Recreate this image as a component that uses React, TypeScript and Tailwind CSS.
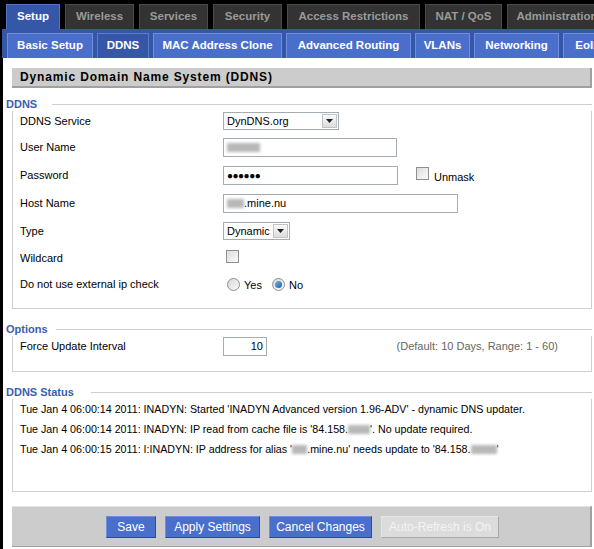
import React from 'react';

const font = { fontFamily: '"Liberation Sans", Arial, sans-serif' };

const topTabs = [
    { label: 'Setup', w: 'w-[54px]', active: true },
    { label: 'Wireless', w: 'w-[69px]' },
    { label: 'Services', w: 'w-[69px]' },
    { label: 'Security', w: 'w-[69px]' },
    { label: 'Access Restrictions', w: 'w-[133px]' },
    { label: 'NAT / QoS', w: 'w-[77px]' },
    { label: 'Administration', w: 'w-[100px]' },
];

const subTabs = [
    { label: 'Basic Setup', w: 'w-[86px]' },
    { label: 'DDNS', w: 'w-[52px]', active: true },
    { label: 'MAC Address Clone', w: 'w-[129px]' },
    { label: 'Advanced Routing', w: 'w-[125px]' },
    { label: 'VLANs', w: 'w-[55px]' },
    { label: 'Networking', w: 'w-[85px]' },
    { label: 'EoIP Tunnel', w: 'w-[90px]' },
];

function Blur({ w }: { w: string }) {
    return <span className={`inline-block h-[9px] ${w} bg-[#b8b8b8] blur-[1.5px] align-middle`} />;
}

function SelectBox({ value, w }: { value: string; w: string }) {
    return (
        <div className={`flex h-[18px] ${w} items-center border border-[#a5acb2] bg-white`}>
            <span className="flex-1 pl-[3px] text-[11px] text-black">{value}</span>
            <span className="mr-[1px] flex h-[14px] w-[15px] items-center justify-center border border-[#c3c3c3] bg-gradient-to-b from-[#fafafa] to-[#dcdcdc]">
                <svg width="7" height="4" viewBox="0 0 7 4"><path d="M0 0h7L3.5 4z" fill="#222" /></svg>
            </span>
        </div>
    );
}

function TextBox({ w, children, right }: { w: string; children?: React.ReactNode; right?: boolean }) {
    return (
        <div className={`flex h-[19px] ${w} items-center border border-[#a5acb2] bg-white px-[3px] text-[11px] text-black ${right ? 'justify-end' : ''}`}>
            {children}
        </div>
    );
}

function Check() {
    return <span className="inline-block h-[13px] w-[13px] border border-[#8f8f8f] bg-gradient-to-br from-[#dcdcdc] to-[#fbfbfb]" />;
}

function Radio({ checked }: { checked?: boolean }) {
    return (
        <span className="flex h-[13px] w-[13px] items-center justify-center rounded-full border border-[#8f8f8f] bg-gradient-to-br from-[#d8d8d8] to-[#fafafa]">
            {checked && <span className="h-[7px] w-[7px] rounded-full bg-gradient-to-br from-[#6fb5ef] to-[#0f5fa8]" />}
        </span>
    );
}

function Section({ title, gap, children, boxClass }: { title: string; gap: string; children: React.ReactNode; boxClass: string }) {
    return (
        <div className="ml-[3px] mr-[2px]">
            <div className="flex h-[14px] items-center">
                <span className="text-[11px] font-bold leading-none text-[#3a5db2]">{title}</span>
                <div className={`${gap} flex-1 border-t border-[#cfcfcf]`} />
            </div>
            <div className={`ml-[6px] border-x border-b border-[#cfcfcf] ${boxClass}`}>{children}</div>
        </div>
    );
}

function Row({ label, children, h = 'h-[28px]' }: { label: string; children: React.ReactNode; h?: string }) {
    return (
        <div className={`flex ${h} items-center`}>
            <span className="w-[210px] shrink-0 pl-[7px] text-[11px] text-black">{label}</span>
            <div className="flex items-center">{children}</div>
        </div>
    );
}

function Btn({ children, w, off }: { children: React.ReactNode; w: string; off?: boolean }) {
    return (
        <div
            className={`flex h-[22px] ${w} items-center justify-center border text-[12px] ${
                off
                    ? 'border-[#e6e6e6] border-b-[#a8a8a8] border-r-[#a8a8a8] bg-[#dcdcdc] text-[#f4f4f4]'
                    : 'border-[#6d8edc] border-b-[#2b4a98] border-r-[#2b4a98] bg-[#4a6fcb] text-white'
            }`}
        >
            {children}
        </div>
    );
}

export default function App() {
    return (
        <div className="h-[549px] w-[594px] overflow-hidden bg-black" style={font}>
            {/* top tabs */}
            <div className="flex h-[29px] items-end gap-[5px] overflow-hidden pl-[6px]">
                {topTabs.map((t) => (
                    <div
                        key={t.label}
                        className={`flex h-[25px] shrink-0 ${t.w} items-center justify-center border border-b-0 text-[11.5px] font-bold ${
                            t.active ? 'border-[#5373c4] bg-[#3656a8] text-white' : 'border-[#4a4a4a] bg-[#333333] text-[#9a9a9a]'
                        }`}
                    >
                        {t.label}
                    </div>
                ))}
            </div>
            {/* sub tabs */}
            <div className="ml-[2px] flex h-[29px] items-end gap-[4px] overflow-hidden bg-[#3656a8] pl-[5px]">
                {subTabs.map((t) => (
                    <div
                        key={t.label}
                        className={`flex h-[25px] shrink-0 ${t.w} items-center justify-center border border-b-0 text-[11.5px] font-bold text-white ${
                            t.active ? 'border-[#5b7bcc] bg-[#3656a8]' : 'border-[#6f8fde] bg-[#4a6fca]'
                        }`}
                    >
                        {t.label}
                    </div>
                ))}
            </div>
            {/* content */}
            <div className="ml-[3px] h-[491px] bg-white pt-[10px]">
                <div className="ml-[9px] mr-[2px] flex h-[20px] items-center border-b-2 border-r-2 border-[#a0a0a0] bg-[#cccccc] pl-[8px] text-[12px] font-bold tracking-[0.85px] text-black">
                    Dynamic Domain Name System (DDNS)
                </div>

                <div className="mt-[9px]">
                    <Section title="DDNS" gap="ml-[15px]" boxClass="h-[198px]">
                        <Row label="DDNS Service" h="h-[20px]">
                            <SelectBox value="DynDNS.org" w="w-[116px]" />
                        </Row>
                        <div className="mt-[2px]">
                            <Row label="User Name">
                                <TextBox w="w-[174px]">
                                    <Blur w="w-[33px]" />
                                </TextBox>
                            </Row>
                        </div>
                        <Row label="Password">
                            <TextBox w="w-[175px]">
                                <span className="text-[10px] font-bold tracking-[-0.5px]">●●●●●●</span>
                            </TextBox>
                            <span className="ml-[18px]">
                                <Check />
                            </span>
                            <span className="ml-[5px] mt-[4px] text-[11px]">Unmask</span>
                        </Row>
                        <Row label="Host Name">
                            <TextBox w="w-[235px]">
                                <Blur w="w-[17px]" />
                                <span>.mine.nu</span>
                            </TextBox>
                        </Row>
                        <Row label="Type">
                            <SelectBox value="Dynamic" w="w-[67px]" />
                        </Row>
                        <Row label="Wildcard" h="h-[26px]">
                            <span className="ml-[3px]">
                                <Check />
                            </span>
                        </Row>
                        <Row label="Do not use external ip check" h="h-[26px]">
                            <span className="ml-[4px]">
                                <Radio />
                            </span>
                            <span className="ml-[4px] mt-[2px] text-[11px]">Yes</span>
                            <span className="ml-[10px]">
                                <Radio checked />
                            </span>
                            <span className="ml-[4px] mt-[2px] text-[11px]">No</span>
                        </Row>
                    </Section>
                </div>

                <div className="mt-[13px]">
                    <Section title="Options" gap="ml-[8px]" boxClass="h-[36px]">
                        <div className="flex h-[21px] items-center pr-[33px]">
                            <span className="w-[210px] shrink-0 pl-[7px] text-[11px] text-black">Force Update Interval</span>
                            <TextBox w="w-[44px]" right>
                                10
                            </TextBox>
                            <span className="flex-1 text-right text-[11px] text-[#666666]">(Default: 10 Days, Range: 1 - 60)</span>
                        </div>
                    </Section>
                </div>

                <div className="mt-[13px]">
                    <Section title="DDNS Status" gap="ml-[17px]" boxClass="h-[93px] text-[10.7px] text-black">
                        <div className="flex h-[20px] items-center pl-[7px]">
                            Tue Jan 4 06:00:14 2011: INADYN: Started 'INADYN Advanced version 1.96-ADV' - dynamic DNS updater.
                        </div>
                        <div className="flex h-[20px] items-center pl-[7px]">
                            <span>Tue Jan 4 06:00:14 2011: INADYN: IP read from cache file is '84.158.</span>
                            <Blur w="w-[22px]" />
                            <span>'. No update required.</span>
                        </div>
                        <div className="flex h-[20px] items-center pl-[7px]">
                            <span>Tue Jan 4 06:00:15 2011: I:INADYN: IP address for alias '</span>
                            <Blur w="w-[15px]" />
                            <span>.mine.nu' needs update to '84.158.</span>
                            <Blur w="w-[26px]" />
                            <span>'</span>
                        </div>
                    </Section>
                </div>

                <div className="ml-[9px] mr-[2px] mt-[14px] flex h-[41px] items-center gap-[9px] border-r-2 border-t border-b border-[#a0a0a0] border-t-[#e2e2e2] bg-[#cccccc] pl-[94px]">
                    <Btn w="w-[50px]">Save</Btn>
                    <Btn w="w-[95px]">Apply Settings</Btn>
                    <Btn w="w-[103px]">Cancel Changes</Btn>
                    <Btn w="w-[118px]" off>
                        Auto-Refresh is On
                    </Btn>
                </div>
            </div>
        </div>
    );
}
